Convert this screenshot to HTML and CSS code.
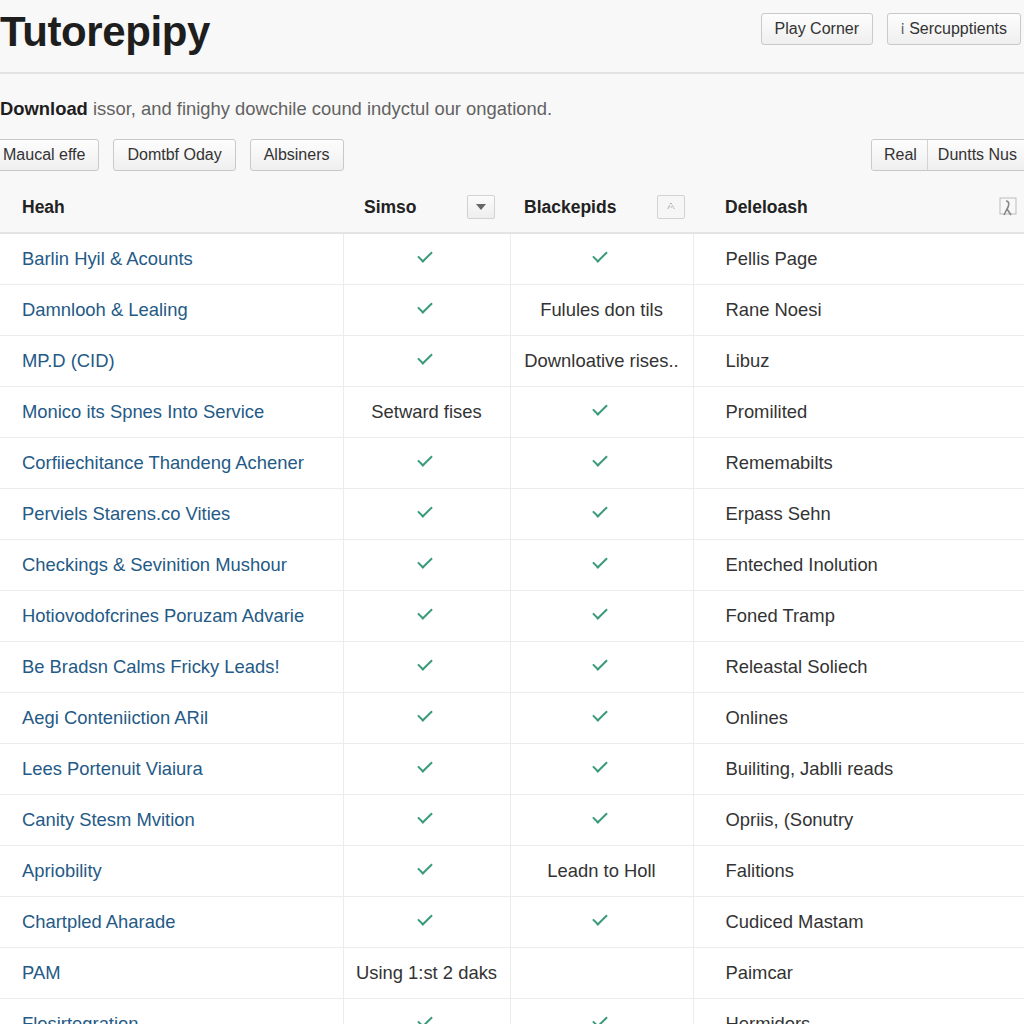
FILE: index.html
```html
<!DOCTYPE html>
<html>
<head>
<meta charset="utf-8">
<link rel="stylesheet" href="styles.css">
</head>
<body>
<header class="topbar">
  <h1 class="title">Tutorepipy</h1>
  <div class="top-actions">
    <button class="btn">Play Corner</button>
    <button class="btn btn-icon"><span class="glyph">ἰ</span>Sercupptients</button>
  </div>
</header>
<p class="desc"><b>Download</b> issor, and finighy dowchile cound indyctul our ongationd.</p>
<div class="toolbar">
  <div class="tool-left">
    <button class="btn first">Maucal effe</button>
    <button class="btn">Domtbf Oday</button>
    <button class="btn">Albsiners</button>
  </div>
  <div class="seg">
    <button class="seg-btn">Real</button>
    <button class="seg-btn">Duntts Nus</button>
  </div>
</div>
<table class="grid">
  <colgroup>
    <col class="c1"><col class="c2"><col class="c3"><col class="c4">
  </colgroup>
  <thead>
    <tr>
      <th class="h1c"><span>Heah</span></th>
      <th class="h2c"><div class="hw"><span>Simso</span><span class="sortbtn"><svg width="12" height="8" viewBox="0 0 12 8"><path d="M1 1h10L6 7z" fill="#666"/></svg></span></div></th>
      <th class="h3c"><div class="hw"><span>Blackepids</span><span class="sortbtn light"><svg width="12" height="10" viewBox="0 0 12 10"><path d="M6 1L2 8M6 1l4 7M3 5h6" stroke="#aaa" stroke-width="1" fill="none" stroke-dasharray="1.5 1.2"/></svg></span></div></th>
      <th class="h4c"><div class="hw"><span>Deleloash</span><span class="iconbox"><svg width="20" height="22" viewBox="0 0 20 22"><rect x="2" y="2" width="16" height="16" fill="none" stroke="#bbb" stroke-width="1"/><path d="M8 5c4 0 3 5 1 8l-3 6M9 13l4 6" stroke="#888" stroke-width="1.6" fill="none"/></svg></span></div></th>
    </tr>
  </thead>
  <tbody>
    <tr><td class="name">Barlin Hyil &amp; Acounts</td><td class="mid"><i class="ck"></i></td><td class="mid"><i class="ck"></i></td><td class="last">Pellis Page</td></tr>
    <tr><td class="name">Damnlooh &amp; Lealing</td><td class="mid"><i class="ck"></i></td><td class="mid">Fulules don tils</td><td class="last">Rane Noesi</td></tr>
    <tr><td class="name">MP.D (CID)</td><td class="mid"><i class="ck"></i></td><td class="mid">Downloative rises..</td><td class="last">Libuz</td></tr>
    <tr><td class="name">Monico its Spnes Into Service</td><td class="mid">Setward fises</td><td class="mid"><i class="ck"></i></td><td class="last">Promilited</td></tr>
    <tr><td class="name">Corfiiechitance Thandeng Achener</td><td class="mid"><i class="ck"></i></td><td class="mid"><i class="ck"></i></td><td class="last">Rememabilts</td></tr>
    <tr><td class="name">Perviels Starens.co Vities</td><td class="mid"><i class="ck"></i></td><td class="mid"><i class="ck"></i></td><td class="last">Erpass Sehn</td></tr>
    <tr><td class="name">Checkings &amp; Sevinition Mushour</td><td class="mid"><i class="ck"></i></td><td class="mid"><i class="ck"></i></td><td class="last">Enteched Inolution</td></tr>
    <tr><td class="name">Hotiovodofcrines Poruzam Advarie</td><td class="mid"><i class="ck"></i></td><td class="mid"><i class="ck"></i></td><td class="last">Foned Tramp</td></tr>
    <tr><td class="name">Be Bradsn Calms Fricky Leads!</td><td class="mid"><i class="ck"></i></td><td class="mid"><i class="ck"></i></td><td class="last">Releastal Soliech</td></tr>
    <tr><td class="name">Aegi Conteniiction ARil</td><td class="mid"><i class="ck"></i></td><td class="mid"><i class="ck"></i></td><td class="last">Onlines</td></tr>
    <tr><td class="name">Lees Portenuit Viaiura</td><td class="mid"><i class="ck"></i></td><td class="mid"><i class="ck"></i></td><td class="last">Builiting, Jablli reads</td></tr>
    <tr><td class="name">Canity Stesm Mvition</td><td class="mid"><i class="ck"></i></td><td class="mid"><i class="ck"></i></td><td class="last">Opriis, (Sonutry</td></tr>
    <tr><td class="name">Apriobility</td><td class="mid"><i class="ck"></i></td><td class="mid">Leadn to Holl</td><td class="last">Falitions</td></tr>
    <tr><td class="name">Chartpled Aharade</td><td class="mid"><i class="ck"></i></td><td class="mid"><i class="ck"></i></td><td class="last">Cudiced Mastam</td></tr>
    <tr><td class="name">PAM</td><td class="mid">Using 1:st 2 daks</td><td class="mid"></td><td class="last">Paimcar</td></tr>
    <tr><td class="name">Flosirtegration</td><td class="mid"><i class="ck"></i></td><td class="mid"><i class="ck"></i></td><td class="last">Hermidors</td></tr>
  </tbody>
</table>
</body>
</html>
```

FILE: styles.css
```css
html, body {
  margin: 0;
  padding: 0;
  background: #f8f8f8;
  font-family: "Liberation Sans", Arial, sans-serif;
  color: #333;
  overflow: hidden;
  height: 1024px;
}

.topbar {
  height: 72px;
  display: flex;
  align-items: flex-start;
  justify-content: space-between;
  border-bottom: 2px solid #e3e3e3;
}

.title {
  margin: 7px 0 0 0;
  font-size: 42px;
  font-weight: bold;
  color: #1e1e1e;
  letter-spacing: -0.4px;
  line-height: 50px;
}

.top-actions {
  display: flex;
  gap: 14px;
  margin-top: 13px;
  margin-right: 3px;
}

.btn {
  font-family: "Liberation Sans", Arial, sans-serif;
  font-size: 16px;
  color: #333;
  height: 32px;
  padding: 0 13px;
  border: 1px solid #c9c9c9;
  border-radius: 3px;
  background: linear-gradient(#fdfdfd, #efefef);
  display: inline-flex;
  align-items: center;
}

.btn-icon .glyph {
  font-size: 14px;
  color: #555;
  margin-right: 5px;
}

.desc {
  margin: 24px 0 0 0;
  font-size: 18.4px;
  line-height: 22px;
  color: #626262;
}

.desc b {
  color: #1e1e1e;
}

.toolbar {
  display: flex;
  justify-content: space-between;
  margin-top: 19px;
  height: 32px;
}

.tool-left {
  display: flex;
  gap: 14px;
}

.btn.first {
  margin-left: -3px;
  padding: 0 13px 0 5px;
}

.seg {
  display: flex;
  border: 1px solid #c9c9c9;
  border-radius: 3px;
  margin-right: -8px;
  overflow: hidden;
}

.seg-btn {
  font-family: "Liberation Sans", Arial, sans-serif;
  font-size: 16px;
  color: #333;
  border: none;
  background: linear-gradient(#fdfdfd, #efefef);
  padding: 0 10px 0 12px;
  height: 30px;
}

.seg-btn + .seg-btn {
  border-left: 1px solid #d3d3d3;
  padding: 0 14px 0 10px;
}

.grid {
  margin-top: 11px;
  width: 1024px;
  table-layout: fixed;
  border-collapse: collapse;
  font-size: 18.4px;
}

.c1 { width: 343px; }
.c2 { width: 167px; }
.c3 { width: 183px; }
.c4 { width: 331px; }

thead th {
  height: 50px;
  text-align: left;
  font-weight: bold;
  font-size: 17.5px;
  color: #222;
  border-bottom: 2px solid #e4e4e4;
  padding: 0;
}

.h1c { padding-left: 22px; }
.h2c { padding: 0 15px 0 21px; }
.h3c { padding: 0 8px 0 14px; }
.h4c { padding: 0 6px 0 32px; }

.hw {
  display: flex;
  align-items: center;
  justify-content: space-between;
}

.sortbtn {
  width: 26px;
  height: 22px;
  border: 1px solid #d2d2d2;
  border-radius: 2px;
  background: linear-gradient(#fbfbfb, #eeeeee);
  display: inline-flex;
  align-items: center;
  justify-content: center;
}

.sortbtn.light {
  background: #f6f6f6;
}

.iconbox {
  display: inline-flex;
}

tbody tr {
  background: #fff;
}

tbody td {
  height: 50px;
  border-bottom: 1px solid #ececec;
  padding: 0;
  white-space: nowrap;
  overflow: hidden;
}

tbody td + td {
  border-left: 1px solid #ececec;
}

.name {
  padding-left: 22px;
  color: #245a86;
}

.mid {
  text-align: center;
  color: #333;
}

.last {
  padding-left: 32px;
  color: #333;
}

.ck {
  display: inline-block;
  width: 12px;
  height: 6px;
  border-left: 2px solid #3a9a7c;
  border-bottom: 2px solid #3a9a7c;
  transform: rotate(-45deg);
  margin-bottom: 6px;
  margin-right: 3px;
}
```
